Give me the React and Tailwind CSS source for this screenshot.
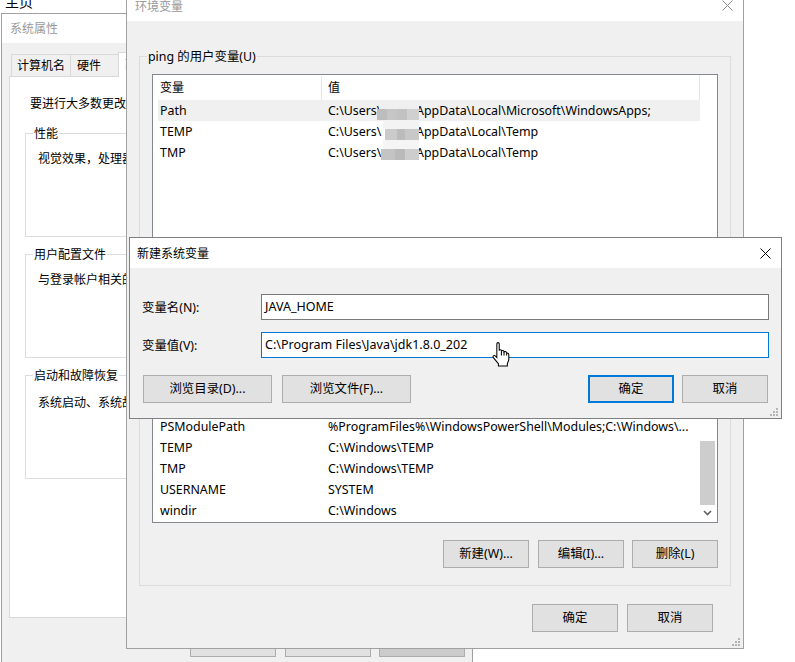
const FONT = "font-['Noto_Sans','Noto_Sans_CJK_SC',sans-serif]";

const CloseIcon = ({ className }) => (
  <svg width="11" height="11" viewBox="0 0 11 11" className={className}>
    <path d="M0.5 0.5L10.5 10.5M10.5 0.5L0.5 10.5" stroke="currentColor" strokeWidth="1" fill="none" />
  </svg>
);

const Grip = ({ className }) => (
  <svg width="8" height="8" viewBox="0 0 8 8" className={className} fill="#b4b4b4">
    <rect x="6" y="0" width="2" height="2" />
    <rect x="3" y="3" width="2" height="2" />
    <rect x="6" y="3" width="2" height="2" />
    <rect x="0" y="6" width="2" height="2" />
    <rect x="3" y="6" width="2" height="2" />
    <rect x="6" y="6" width="2" height="2" />
  </svg>
);

const Button = ({ children, className = 'w-[86px]', primary, bg = 'bg-[#e1e1e1]' }) => (
  <div
    className={`h-[28px] flex items-center justify-center pt-px text-[12.4px] text-black ${bg} ${
      primary ? 'border-2 border-[#0078d7]' : 'border border-[#adadad]'
    } ${className}`}
  >
    {children}
  </div>
);

const Row = ({ name, value, selected }) => (
  <div className={`flex items-center h-[21px] pt-px w-[542px] ml-[5px] shrink-0 whitespace-nowrap ${selected ? 'bg-[#f0f0f0]' : ''}`}>
    <div className="w-[170px] pl-[2px]">{name}</div>
    <div>{value}</div>
  </div>
);

// blurred user name, the flow text runs under it
const Mosaic = () => (
  <svg width="42" height="60" viewBox="0 0 42 60" className="absolute left-[377px] top-[101px]">
    <rect x="2" y="0" width="40" height="8" fill="#efefef" />
    <rect x="0" y="8" width="10" height="11" fill="#bdbdbd" />
    <rect x="10" y="8" width="10" height="11" fill="#c6c6c6" />
    <rect x="20" y="8" width="10" height="11" fill="#c2c2c2" />
    <rect x="30" y="8" width="12" height="11" fill="#d0d0d0" />
    <rect x="6" y="19" width="36" height="9" fill="#f3f3f3" />
    <rect x="8" y="28" width="12" height="11" fill="#cbcbcb" />
    <rect x="20" y="28" width="8" height="11" fill="#bcbcbc" />
    <rect x="28" y="28" width="14" height="11" fill="#c8c8c8" />
    <rect x="6" y="39" width="36" height="9" fill="#f5f5f5" />
    <rect x="4" y="48" width="14" height="11" fill="#c4c4c4" />
    <rect x="18" y="48" width="10" height="11" fill="#bababa" />
    <rect x="28" y="48" width="14" height="11" fill="#cdcdcd" />
  </svg>
);

const HandCursor = () => (
  <svg width="18" height="25" viewBox="0 0 17 24" className="absolute left-[492px] top-[342px]">
    <path
      d="M4.5 1.8C4.5 0.2 6.8 0.2 6.8 1.8V8.2C7.2 7.2 9 7.2 9.2 8.6C9.6 7.8 11.2 7.9 11.4 9.4C11.9 8.8 13.7 9 13.9 10.6C14.6 10.3 15.9 10.8 16 12.2V16.5C16 18.2 15 19.5 14.6 20.5V23H6V20.8C4.8 19.5 3.4 17.6 1.2 15C0.2 13.6 1.6 12.3 3 13.3L4.5 14.8Z"
      fill="#fff"
      stroke="#000"
      strokeWidth="1"
    />
    <path d="M8.9 8.8V13M11.4 9.6V13M13.9 10.8V13" stroke="#000" strokeWidth="1" fill="none" />
  </svg>
);

const UserPath = ({ rest }) => (
  <>
    <span className="inline-block w-[88px]">C:\Users\</span>
    {rest}
  </>
);

const Legend = ({ children }) => (
  <legend className="-ml-[5px] px-[1px] leading-[16px]">
    <span className="inline-block translate-y-px">{children}</span>
  </legend>
);

const PropGroup = ({ label, text, className }) => (
  <fieldset className={`border border-[#dcdcdc] pl-[12px] ${className}`}>
    <Legend>{label}</Legend>
    <div className="whitespace-nowrap leading-[16px]">{text}</div>
  </fieldset>
);

const SystemProps = () => (
  <div className="absolute isolate left-[1px] top-[13px] w-[472px] h-[670px] border border-[#a0a0a0] bg-[#f0f0f0] flex flex-col text-[12px]">
    <div className="h-[29px] shrink-0 bg-white flex items-center pl-[8px] pt-px text-[#999999]">系统属性</div>
    <div className="pl-[9px] pt-[9px] flex items-end h-[34px] shrink-0 relative z-10 -mb-px">
      <div className="h-[23px] w-[60px] border border-[#d9d9d9] border-b-0 flex items-center pl-[5px]">计算机名</div>
      <div className="h-[23px] w-[47px] border-t border-[#d9d9d9] flex items-center pl-[6px]">硬件</div>
      <div className="h-[25px] w-[60px] bg-white border border-[#d9d9d9] border-b-0 flex items-center pl-[6px]">高级</div>
    </div>
    <div className="ml-[7px] w-[456px] h-[542px] shrink-0 bg-white border border-[#d9d9d9] px-[15px] pt-[19px] flex flex-col">
      <div className="pl-[5px] leading-[16px] whitespace-nowrap">要进行大多数更改，你必须作为管理员登录。</div>
      <PropGroup className="mt-[13px] h-[112px] pt-[10px]" label="性能" text="视觉效果，处理器计划，内存使用，以及虚拟内存" />
      <PropGroup className="mt-[9px] h-[112px] pt-[10px]" label="用户配置文件" text="与登录帐户相关的桌面设置" />
      <PropGroup className="mt-[9px] h-[112px] pt-[12px]" label="启动和故障恢复" text="系统启动、系统故障和调试信息" />
    </div>
    <div className="flex justify-end gap-2 mt-[11px] mr-[7px]">
      <Button className="w-[86px] mr-px" />
      <Button className="w-[86px]" />
      <Button className="w-[86px]" bg="bg-[#cccccc]" />
    </div>
  </div>
);

const EnvWindow = () => (
  <div className="absolute isolate left-[126px] top-[-11px] w-[618px] h-[660px] border border-[#a0a0a0] bg-[#f0f0f0] flex flex-col">
    <div className="h-[31px] shrink-0 bg-white flex items-center justify-between pl-[8px] pr-[10px] text-[#999999]">
      <span className="pt-[2px] text-[12px]">环境变量</span>
      <CloseIcon className="text-[#8a8a8a]" />
    </div>
    <div className="flex-1 flex flex-col px-[12px] pt-[27px] min-h-0">
      <fieldset className="h-[237px] shrink-0 border border-[#dcdcdc] px-[12px] pt-[10px]">
        <Legend>ping 的用户变量(U)</Legend>
        <div className="h-[195px] border border-[#828790] bg-white flex flex-col">
          <div className="flex h-[25px] pt-px shrink-0 ml-[5px] w-[542px] border-r border-[#e5e5e5]">
            <div className="w-[164px] pl-[2px] border-r border-[#e5e5e5] flex items-center text-[12px]">变量</div>
            <div className="pl-[6px] flex items-center text-[12px]">值</div>
          </div>
          <Row selected name="Path" value={<UserPath rest="AppData\Local\Microsoft\WindowsApps;" />} />
          <Row name="TEMP" value={<UserPath rest="AppData\Local\Temp" />} />
          <Row name="TMP" value={<UserPath rest="AppData\Local\Temp" />} />
        </div>
      </fieldset>
      <fieldset className="flex-1 min-h-0 mt-[10px] border border-[#dcdcdc] px-[12px] pt-[20px] pb-[16px] flex flex-col">
        <div className="h-[207px] shrink-0 border border-[#828790] bg-white flex justify-between overflow-hidden">
          <div className="flex flex-col justify-end pb-[1px]">
            <Row name="PSModulePath" value="%ProgramFiles%\WindowsPowerShell\Modules;C:\Windows\..." />
            <Row name="TEMP" value="C:\Windows\TEMP" />
            <Row name="TMP" value="C:\Windows\TEMP" />
            <Row name="USERNAME" value="SYSTEM" />
            <Row name="windir" value="C:\Windows" />
          </div>
          <div className="w-[17px] shrink-0 flex flex-col justify-end">
            <div className="h-[64px] w-[15px] bg-[#cdcdcd]" />
            <div className="h-[17px] flex items-center justify-center pr-[2px] pb-[2px]">
              <svg width="9" height="6" viewBox="0 0 9 6">
                <path d="M1 1L4.5 4.5L8 1" stroke="#606060" strokeWidth="1.6" fill="none" />
              </svg>
            </div>
          </div>
        </div>
        <div className="flex justify-end mt-[17px]">
          <Button className="w-[86px] mr-[9px]">新建(W)...</Button>
          <Button className="w-[86px] mr-[8px]">编辑(I)...</Button>
          <Button className="w-[86px]">删除(L)</Button>
        </div>
      </fieldset>
      <div className="flex justify-end gap-[9px] pt-[18px] pb-[16px] pr-[18px]">
        <Button>确定</Button>
        <Button>取消</Button>
      </div>
    </div>
    <Grip className="absolute right-[3px] bottom-[2px]" />
  </div>
);

const Field = ({ label, value, focused }) => (
  <div className="flex items-center">
    <div className="w-[119px] shrink-0 pt-[2px]">{label}</div>
    <div className={`flex-1 h-[26px] bg-white border flex items-center pl-[3px] text-[12.5px] ${focused ? 'border-[#0078d7]' : 'border-[#7a7a7a]'}`}>
      {value}
    </div>
  </div>
);

const NewVarDialog = () => (
  <div className="absolute left-[129px] top-[237px] w-[653px] h-[182px] border border-[#808080] bg-[#f0f0f0] flex flex-col">
    <div className="h-[30px] shrink-0 bg-white flex items-center justify-between pl-[7px] pr-[10px]">
      <span className="pt-px text-[12px]">新建系统变量</span>
      <CloseIcon className="text-black" />
    </div>
    <div className="px-[12px] pt-[26px] flex flex-col gap-[12px]">
      <Field label="变量名(N):" value="JAVA_HOME" />
      <Field focused label="变量值(V):" value="C:\Program Files\Java\jdk1.8.0_202" />
    </div>
    <div className="flex justify-between pl-[13px] pr-[13px] mt-[17px]">
      <div className="flex gap-[10px]">
        <Button className="w-[129px]">浏览目录(D)...</Button>
        <Button className="w-[129px]">浏览文件(F)...</Button>
      </div>
      <div className="flex gap-[8px]">
        <Button primary>确定</Button>
        <Button>取消</Button>
      </div>
    </div>
    <Grip className="absolute right-[3px] bottom-[2px]" />
  </div>
);

export default function App() {
  return (
    <div className={`relative w-[795px] h-[662px] overflow-hidden bg-white text-[12.4px] text-black ${FONT}`}>
      <div className="absolute left-[5px] top-[-7px] text-[14px] leading-[18px]">主页</div>
      <SystemProps />
      <EnvWindow />
      <Mosaic />
      <NewVarDialog />
      <HandCursor />
    </div>
  );
}
